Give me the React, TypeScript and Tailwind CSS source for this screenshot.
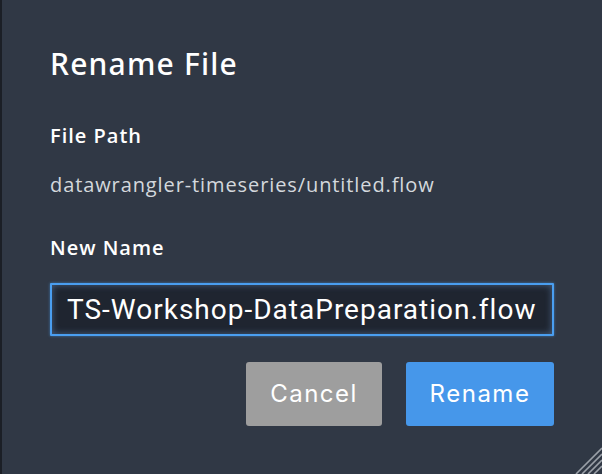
import React from "react";

export default function App() {
  return (
    <div className="relative flex h-[474px] w-[602px] overflow-hidden bg-[#303845]">
      <div className="w-[2px] shrink-0 bg-[#1b1f26]" />
      <div className="w-[552px] pl-[48px] font-['Open_Sans',sans-serif] text-white">
        <h1 className="mt-[46px] font-['Noto_Sans',sans-serif] text-[30px] leading-[36px] font-medium tracking-[1.2px]">
          Rename File
        </h1>
        <div className="mt-[40px] text-[20px] leading-[28px] font-semibold tracking-[1px]">File Path</div>
        <div className="mt-[21px] text-[20px] leading-[28px] tracking-[0.9px] text-[#d4d8dd]">
          datawrangler-timeseries/untitled.flow
        </div>
        <div className="mt-[35px] text-[20px] leading-[28px] font-semibold tracking-[1px]">New Name</div>
        <input
          readOnly
          value="TS-Workshop-DataPreparation.flow"
          className="mt-[21px] block h-[53px] w-[504px] rounded-[1px] border-2 border-[#4a9ef0] bg-[#1f2530] px-[15px] font-['Roboto',sans-serif] text-[28px] tracking-[1px] text-white shadow-[inset_0_0_7px_rgba(120,170,230,0.45),0_0_3px_rgba(74,158,240,0.6)] outline-none"
        />
        <div className="mt-[26px] flex justify-end gap-[24px] font-['Inter',sans-serif]">
          <button className="h-[64px] w-[136px] rounded-[3px] bg-[#9e9e9e] text-[24px] tracking-[1.5px] text-white">
            Cancel
          </button>
          <button className="h-[64px] w-[148px] rounded-[3px] bg-[#4697ea] text-[24px] tracking-[1.5px] text-white">
            Rename
          </button>
        </div>
      </div>
      <svg
        className="absolute right-0 bottom-0"
        width="28"
        height="28"
        viewBox="0 0 28 28"
      >
        <g stroke="#9aa0a8" strokeWidth="1.6">
          <line x1="28" y1="2" x2="2" y2="28" />
          <line x1="28" y1="8" x2="8" y2="28" />
          <line x1="28" y1="14" x2="14" y2="28" />
          <line x1="28" y1="20" x2="20" y2="28" />
        </g>
      </svg>
    </div>
  );
}
